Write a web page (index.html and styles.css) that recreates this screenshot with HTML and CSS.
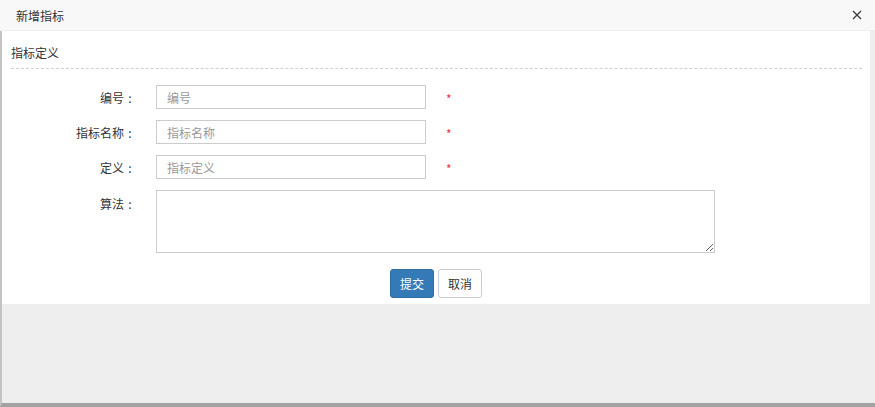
FILE: index.html
```html
<!DOCTYPE html>
<html lang="zh">
<head>
<meta charset="utf-8">
<title>新增指标</title>
<link rel="stylesheet" href="styles.css">
</head>
<body>
<div class="page">
  <div class="header">
    <span class="title">新增指标</span>
    <span class="close" aria-label="关闭">
      <svg width="10" height="10" viewBox="0 0 10 10"><path d="M1 1L9 9M9 1L1 9" stroke="#3a3a3a" stroke-width="1.3" fill="none"/></svg>
    </span>
  </div>
  <div class="frame">
    <div class="panel">
      <div class="section-head">指标定义</div>
      <form class="form">
        <div class="row">
          <label class="label">编号<span class="colon">:</span></label>
          <input class="input" type="text" placeholder="编号">
          <span class="star">*</span>
        </div>
        <div class="row">
          <label class="label">指标名称<span class="colon">:</span></label>
          <input class="input" type="text" placeholder="指标名称">
          <span class="star">*</span>
        </div>
        <div class="row">
          <label class="label">定义<span class="colon">:</span></label>
          <input class="input" type="text" placeholder="指标定义">
          <span class="star">*</span>
        </div>
        <div class="row row-top">
          <label class="label label-top">算法<span class="colon">:</span></label>
          <textarea class="textarea"></textarea>
        </div>
        <div class="actions">
          <button type="button" class="btn btn-primary">提交</button>
          <button type="button" class="btn btn-default">取消</button>
        </div>
      </form>
    </div>
  </div>
</div>
</body>
</html>
```

FILE: styles.css
```css
* { box-sizing: border-box; }
html, body { margin: 0; padding: 0; }
body {
  font-family: "Noto Sans CJK SC", "Noto Sans", sans-serif;
  color: #333;
  background: #eeeeee;
}
.page {
  width: 875px;
  height: 407px;
  display: flex;
  flex-direction: column;
}
.header {
  height: 31px;
  flex: none;
  background: #f8f8f8;
  border-bottom: 1px solid #eee;
  display: flex;
  align-items: center;
  justify-content: space-between;
  padding: 0 13px 0 16px;
}
.title { font-size: 12px; color: #333; }
.close { display: flex; width: 10px; height: 10px; }
.frame {
  flex: 1;
  background: #eeeeee;
  border-left: 2px solid #c4c4c4;
  border-bottom: 4px solid #a3a3a3;
}
.panel {
  background: #fff;
  margin-right: 5px;
  height: 273px;
}
.section-head {
  margin: 0 8px 0 9px;
  padding: 14px 0 7px 0;
  font-size: 12px;
  line-height: 16px;
  border-bottom: 1px dashed #d0d0d0;
}
.form { padding-top: 16px; }
.row {
  display: flex;
  align-items: center;
  margin-bottom: 11px;
}
.row-top { align-items: flex-start; }
.label {
  width: 134px;
  flex: none;
  text-align: right;
  font-size: 12px;
  margin-right: 20px;
  color: #333;
}
.colon {
  display: inline-block;
  width: 12px;
  text-align: center;
}
.label-top { padding-top: 5px; }
.input {
  width: 270px;
  height: 24px;
  border: 1px solid #ccc;
  border-radius: 0;
  padding: 0 10px;
  font-family: inherit;
  font-size: 12px;
  color: #333;
  outline: none;
}
.input::placeholder { color: #999; }
.star {
  color: #e4393c;
  font-size: 12px;
  margin-left: 20px;
  line-height: 12px;
  padding-top: 4px;
}
.textarea {
  width: 559px;
  height: 63px;
  border: 1px solid #ccc;
  font-family: inherit;
  font-size: 12px;
  padding: 4px 8px;
  outline: none;
  resize: both;
}
.actions {
  display: flex;
  justify-content: center;
  gap: 4px;
  padding-top: 5px;
}
.btn {
  height: 29px;
  width: 44px;
  font-family: inherit;
  font-size: 12px;
  border-radius: 3px;
  padding: 0;
  cursor: pointer;
}
.btn-primary {
  background: #337ab7;
  border: 1px solid #2e6da4;
  color: #fff;
}
.btn-default {
  background: #fff;
  border: 1px solid #ccc;
  color: #333;
}
```
